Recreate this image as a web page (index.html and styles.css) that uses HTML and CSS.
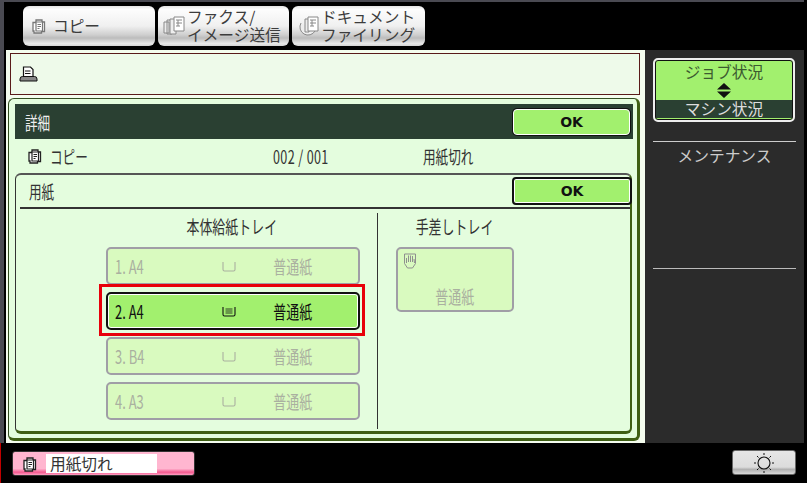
FILE: index.html
```html
<!DOCTYPE html>
<html lang="ja">
<head>
<meta charset="utf-8">
<title>用紙切れ</title>
<link rel="stylesheet" href="styles.css">
</head>
<body>
<svg class="defs" width="0" height="0">
  <symbol id="copy" viewBox="0 0 16 16">
    <path d="M2 4.500h3v-2.500h6v2h2.500v9.500h-3v1.500h-7.500v-2h-1z" fill="#fff" stroke="currentColor" stroke-width="1.300"/>
    <path d="M5 4h6.500v9h-6.500z" fill="#fff" stroke="currentColor" stroke-width="1.200"/>
    <path d="M6.500 6.500h3.500M6.500 8.500h3.500M6.500 10.500h2" stroke="currentColor" stroke-width="1"/>
  </symbol>
  <symbol id="stack" viewBox="0 0 22 22">
    <path d="M1 7h5v11h-5zM4 5h5v14h-5z" fill="#eee" stroke="currentColor"/>
    <path d="M7 4h6v15h-6z" fill="#eee" stroke="currentColor"/>
    <path d="M11 2h10v14h-10z" fill="#fff" stroke="currentColor"/>
    <path d="M13 5h6M13 8h6M13 11h4M15 5v6" stroke="currentColor" fill="none"/>
  </symbol>
  <symbol id="disc" viewBox="0 0 22 22">
    <path d="M4 8a8 8 0 1 0 14 8" fill="#eee" stroke="currentColor"/>
    <path d="M8 4h4v13h-4z" fill="#eee" stroke="currentColor"/>
    <path d="M11 2h10v14h-10z" fill="#fff" stroke="currentColor"/>
    <path d="M13 5h6M13 8h6M13 11h4M15 5v6" stroke="currentColor" fill="none"/>
  </symbol>
  <symbol id="tray" viewBox="0 0 14 11">
    <path d="M1 1v7.500q0 1.500 1.500 1.500h9q1.500 0 1.500-1.500v-7.500" fill="none" stroke="currentColor" stroke-width="1.100"/>
  </symbol>
  <symbol id="trayfull" viewBox="0 0 14 11">
    <path d="M1 1v7.500q0 1.500 1.500 1.500h9q1.500 0 1.500-1.500v-7.500" fill="none" stroke="currentColor" stroke-width="1.100"/>
    <path d="M3.500 3h7M3.500 5h7M3.500 7h7" stroke="currentColor" stroke-width=".8"/>
  </symbol>
</svg>
<div class="shell">
  <nav class="tabs">
    <div class="tab tab-one"><svg class="tab-ico-sm"><use href="#copy"/></svg><span>コピー</span></div>
    <div class="tab"><svg class="tab-ico"><use href="#stack"/></svg><div class="tab-two"><div class="tab-line">ファクス/</div><div class="tab-line">イメージ送信</div></div></div>
    <div class="tab tab-last"><svg class="tab-ico"><use href="#disc"/></svg><div class="tab-two"><div class="tab-line">ドキュメント</div><div class="tab-line">ファイリング</div></div></div>
  </nav>
  <div class="main">
    <div class="work">
      <div class="message">
        <svg class="printer" viewBox="0 0 19 16">
          <path d="M4.500 1h7l2.500 2.500v7.500h-9.500z" fill="#fff" stroke="#111" stroke-width="1.200"/>
          <path d="M6 5h5.500M6 7.500h5.500" stroke="#111"/>
          <path d="M1 15v-2q0-2.500 2.500-2.500h12q2.500 0 2.500 2.500v2z" fill="#888" stroke="#111"/>
        </svg>
      </div>
      <section class="detail">
        <header class="detail-head">
          <span class="sq head-label">詳細</span>
          <button class="ok ok-head">OK</button>
        </header>
        <div class="job-row">
          <div class="job-name"><svg class="job-ico"><use href="#copy"/></svg><span class="sq">コピー</span></div>
          <div><span class="sq count">002 / 001</span></div>
          <div><span class="sq">用紙切れ</span></div>
        </div>
        <section class="paper">
          <header class="paper-head">
            <span class="sq">用紙</span>
            <button class="ok ok-paper">OK</button>
          </header>
          <div class="paper-body">
            <div class="col-main">
              <h3 class="col-title"><span class="sq sq-c">本体給紙トレイ</span></h3>
              <div class="tray off">
                <span class="sq tray-num">1. A4</span><svg class="tray-ico"><use href="#tray"/></svg><span class="tray-kind"><span class="sq sq-c">普通紙</span></span>
              </div>
              <div class="tray on">
                <span class="sq tray-num">2. A4</span><svg class="tray-ico"><use href="#trayfull"/></svg><span class="tray-kind"><span class="sq sq-c">普通紙</span></span>
              </div>
              <div class="tray off">
                <span class="sq tray-num">3. B4</span><svg class="tray-ico"><use href="#tray"/></svg><span class="tray-kind"><span class="sq sq-c">普通紙</span></span>
              </div>
              <div class="tray off">
                <span class="sq tray-num">4. A3</span><svg class="tray-ico"><use href="#tray"/></svg><span class="tray-kind"><span class="sq sq-c">普通紙</span></span>
              </div>
            </div>
            <div class="col-side">
              <h3 class="col-title"><span class="sq sq-c">手差しトレイ</span></h3>
              <div class="manual">
                <svg class="hand" viewBox="0 0 14 16">
                  <path d="M1.500 1h11v9.500l-3 4.500h-5l-3-4.500z" fill="none" stroke="currentColor"/>
                  <path d="M3.500 10v-5M5.500 9v-6.500M7.500 9v-6.500M9.500 9v-6M11.500 10l-.5-4" stroke="currentColor" fill="none"/>
                </svg>
                <span class="sq sq-c manual-kind">普通紙</span>
              </div>
            </div>
          </div>
        </section>
      </section>
    </div>
    <aside class="side">
      <div class="status">
        <div class="status-job">ジョブ状況</div>
        <svg class="status-arrows" viewBox="0 0 16 15"><path d="M8 0l7 6.500h-14zM8 15l-7-6.500h14z" fill="#111"/></svg>
        <div class="status-machine">マシン状況</div>
      </div>
      <div class="maint">メンテナンス</div>
      <div class="side-line"></div>
    </aside>
  </div>
</div>
<footer class="foot">
  <div class="alert">
    <svg class="alert-ico"><use href="#copy"/></svg>
    <div class="alert-text">用紙切れ</div>
  </div>
  <button class="sun">
    <svg class="sun-ico" viewBox="0 0 22 22">
      <circle cx="11" cy="11" r="6" fill="none" stroke="#111" stroke-width="1.100"/>
      <path d="M11 1v2M11 19v2M1 11h2M19 11h2M4 4l1.500 1.500M16.500 16.500l1.500 1.500M18 4l-1.500 1.500M5.500 16.500l-1.500 1.500" stroke="#111"/>
    </svg>
  </button>
</footer>
</body>
</html>
```

FILE: styles.css
```css
* { box-sizing: border-box; }
html, body { margin: 0; padding: 0; }
body {
  width: 807px; height: 483px; overflow: hidden; background: #000;
  font-family: "Noto Sans CJK JP", "Liberation Sans", sans-serif;
  color: #222;
}
.defs { position: absolute; }
.sq { display: inline-block; transform: scaleX(.7); transform-origin: left center; white-space: nowrap; }
.sq-c { transform-origin: center; }
.count { letter-spacing: .5px; }

.shell {
  height: 443px; display: flex; flex-direction: column;
  border-top: 2px solid #4a4a52; border-left: 4px solid #4a4a52;
  margin-right: 3px;
}
.tabs { height: 48px; display: flex; gap: 3px; padding: 4px 0 0 19px; background: #000; }
.tab {
  width: 131px; height: 40px; display: flex; align-items: center; padding-left: 5px; gap: 2px;
  border-radius: 6px; color: #3c3c3c; font-size: 15.700px; line-height: 18px;
  background: linear-gradient(#e4e4e4 0, #fdfdfd 8%, #f0f0f0 50%, #cfcfcf 72%, #bcbcbc 80%, #e8e8e8 94%, #d4d4d4 100%);
}
.tab-one { width: 132px; padding-left: 8px; gap: 6px; }
.tab-last { width: 133px; }
.tab-ico-sm { width: 16px; height: 16px; color: #777; }
.tab-ico { width: 22px; height: 22px; color: #888; flex: none; }
.tab-two { margin-top: -1px; white-space: nowrap; }
.tab-line { height: 18px; line-height: 18px; overflow: visible; }

.main { flex: 1; display: flex; min-height: 0; padding-left: 2px; }
.work {
  width: 639px; background: #f4fcee; padding: 3px 5px 2px 2px;
  display: flex; flex-direction: column; gap: 3px;
}
.message {
  margin-left: 2px; height: 42px; background: #eefaea; border: 1px solid #5a1a1a;
  display: flex; align-items: center; padding-left: 8px;
}
.printer { width: 19px; height: 16px; }
.detail {
  flex: 1; border: 1px solid #334d22; border-right: 3px solid #3f5f14; border-bottom: 3px solid #3f5f14;
  border-radius: 6px; background: #e4fdde; padding: 5px 4px 4px 6px;
  display: flex; flex-direction: column;
}
.detail-head {
  height: 35px; flex: none; background: #2a4032; color: #eee;
  display: flex; align-items: center; justify-content: space-between; padding: 0 4px 0 10px; font-size: 18px;
}
.ok {
  font-family: "DejaVu Sans", sans-serif; font-weight: bold; font-size: 14px; color: #111;
  background: #a2f06e; border: 2px solid #111; box-shadow: inset 0 0 0 1px #fff;
  border-radius: 4px; padding: 0;
}
.ok-head { width: 117px; height: 26px; border: 1px solid #fff; box-shadow: 0 0 0 1px #111; margin-right: -1px; }
.ok-paper { width: 120px; height: 28px; margin-right: -2px; }
.job-row {
  height: 34px; flex: none; display: grid; grid-template-columns: 258px 150px 1fr;
  align-items: center; font-size: 18px; color: #333;
}
.job-name { display: flex; align-items: center; padding-left: 12px; gap: 7px; }
.job-ico { width: 16px; height: 16px; color: #222; }
.paper {
  flex: 1; margin: 0 1px 0 0; border-top: 2px solid #555; border-left: 1px solid #333;
  border-right: 2px solid #3f5f14; border-bottom: 3px solid #3f5f14; border-radius: 6px;
  display: flex; flex-direction: column; min-height: 0;
}
.paper-head {
  height: 34px; flex: none; margin: 0 0 0 4px; border-bottom: 2px solid #333;
  display: flex; align-items: center; justify-content: space-between; padding: 0 0 0 9px;
  font-size: 18px; color: #333;
}
.paper-body { flex: 1; display: flex; padding-top: 4px; min-height: 0; }
.col-main { width: 362px; height: 216px; border-right: 1px solid #333; padding-left: 90px; }
.col-side { padding-left: 18px; }
.col-title { margin: 0 0 8px; height: 26px; font-size: 18.500px; font-weight: 400; line-height: 26px; text-align: center; color: #333; }
.col-main .col-title { width: 252px; }
.col-side .col-title { width: 118px; }
.tray {
  position: relative;
  width: 254px; height: 38px; margin-bottom: 7px; border-radius: 5px;
  display: flex; align-items: center; padding-left: 7px; font-size: 18.500px;
}
.tray.off { background: #d9fabf; border: 2px solid #a09ea6; color: #aab0a0; }
.tray.on { background: #a2f06e; border: 2px solid #111; box-shadow: inset 0 0 0 1px #fff; color: #111; }
.tray.on::after {
  content: ""; position: absolute; inset: -10px -7px -8px -9px; border: 3px solid #e8000a; pointer-events: none;
}
.tray-num { width: 107px; }
.tray-ico { width: 14px; height: 11px; }
.tray-kind { width: 113px; text-align: center; }
.manual {
  width: 118px; height: 65px; background: #d9fabf; border: 2px solid #a09ea6; border-radius: 5px;
  color: #aab0a0; font-size: 18.500px; display: flex; flex-direction: column; align-items: center; padding-top: 4px;
}
.hand { width: 14px; height: 16px; align-self: flex-start; margin-left: 5px; color: #8f8f8f; }
.manual-kind { margin-top: 14px; }

.side { width: 159px; background: #2b2b2b; padding: 8px 8px 0; color: #ccc; font-size: 15.700px; }
.status {
  margin: 0 1px 0 0; height: 64px; background: #a2f06e; border: 2px solid #eee; box-shadow: 0 0 0 1px #111 inset;
  border-radius: 5px; display: flex; flex-direction: column; align-items: center; padding: 1px 1px 2px; color: #3c5a30;
}
.status-job { height: 22px; line-height: 21px; }
.status-arrows { width: 16px; height: 15px; flex: none; margin-bottom: 2px; }
.status-machine { align-self: stretch; flex: 1; background: #2a4032; color: #ddd; text-align: center; line-height: 18px; }
.maint { margin: 19px 0 0; border-top: 1px solid #ccc; text-align: center; line-height: 26px; padding-top: 1px; }
.side-line { border-top: 1px solid #bbb; margin-top: 99px; }

.foot {
  height: 40px; display: flex; align-items: flex-start; justify-content: space-between;
  padding: 8px 11px 0 11px; border-left: 1px solid #c00000;
}
.alert {
  width: 183px; height: 25px; background: linear-gradient(#ffb6d0 0, #ffb6d0 72%, #f45a90 88%, #ff9fc2 100%);
  border: 1px solid #333; border-radius: 3px; display: flex; align-items: center; padding-left: 9px; gap: 8px;
}
.alert-ico { width: 16px; height: 18px; color: #222; }
.alert-text { width: 111px; height: 19px; background: #fff; font-size: 15.700px; line-height: 19px; padding-left: 4px; color: #333; }
.sun {
  width: 64px; height: 25px; padding: 0; margin-top: -1px; border: 1px solid #666; border-radius: 3px;
  background: linear-gradient(#e6e6e6, #dcdcdc 70%, #b0b0b0 80%, #d8d8d8);
  display: flex; align-items: center; justify-content: center;
}
.sun-ico { width: 22px; height: 22px; }
```
